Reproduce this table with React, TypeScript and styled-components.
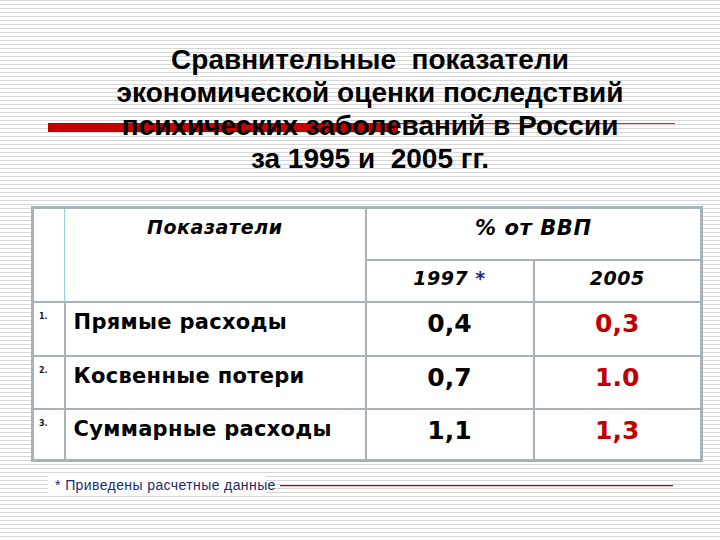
import React from "react";
import styled, { createGlobalStyle } from "styled-components";

const Global = createGlobalStyle`
  html, body { margin: 0; padding: 0; }
  body {
    background: repeating-linear-gradient(180deg, #d7d7d7 0px, #d7d7d7 1.3px, #ffffff 1.3px, #ffffff 4px);
  }
`;

const Page = styled.div`
  width: 720px;
  height: 540px;
  position: relative;
  overflow: hidden;
  display: flex;
  flex-direction: column;
`;

const Title = styled.div`
  position: relative;
  padding: 43px 0 0 20px;
  text-align: center;
  font-family: "Liberation Sans", Arial, sans-serif;
  font-weight: bold;
  font-size: 28px;
  line-height: 33px;
  color: #000;
`;

const TitleLine = styled.div`
  position: relative;
  z-index: 1;
  white-space: pre;
`;

const ThickBar = styled.div`
  position: absolute;
  left: 48px;
  top: 123px;
  width: 350px;
  height: 9px;
  background: #c40000;
  z-index: 0;
`;

const ThinBar = styled.div`
  position: absolute;
  left: 398px;
  top: 123px;
  width: 277px;
  height: 1px;
  background: #c0303a;
  box-shadow: 0 1px 0 #f2c4c4;
  z-index: 0;
`;

const TableWrap = styled.div`
  margin: 31px 0 0 31px;
`;

const Table = styled.table`
  border-collapse: collapse;
  width: 669px;
  table-layout: fixed;
  background: #fff;
  border: 3px solid #a9b1b9;
  font-family: "DejaVu Sans", Verdana, sans-serif;
  font-weight: bold;
  color: #000;
`;

const Col = styled.col<{ $w: number }>`
  width: ${(p) => p.$w}px;
`;

const Row = styled.tr<{ $h: number }>`
  height: ${(p) => p.$h}px;
`;

const Cell = styled.td`
  border: 2px solid #a9b1b9;
  padding: 0;
  vertical-align: top;
`;

const NumHead = styled(Cell)`
  border-right: 1px solid #8fd4d4;
`;

const LabelHead = styled(Cell)`
  border-left: none;
  text-align: center;
  font-style: italic;
  font-size: 19px;
  letter-spacing: 0.6px;
  padding-top: 7px;
`;

const GroupHead = styled(Cell)`
  text-align: center;
  font-style: italic;
  font-size: 21px;
  letter-spacing: 0.6px;
  padding-top: 7px;
`;

const YearHead = styled(Cell)`
  text-align: center;
  font-style: italic;
  font-size: 19px;
  letter-spacing: 0.5px;
  padding-top: 6px;
`;

const Star = styled.span`
  color: #1b2a78;
`;

const NumCell = styled(Cell)`
  font-size: 8px;
  padding: 9px 0 0 5px;
  color: #1a1a2a;
`;

const LabelCell = styled(Cell)`
  font-size: 21px;
  letter-spacing: 0.3px;
  line-height: 24px;
  padding: 7px 0 0 8px;
  white-space: nowrap;
`;

const ValueCell = styled(Cell)<{ $red?: boolean }>`
  font-size: 25px;
  line-height: 28px;
  padding-top: 7px;
  text-align: center;
  color: ${(p) => (p.$red ? "#c00000" : "#000")};
`;

const Footer = styled.div`
  display: flex;
  align-items: center;
  margin: 12px 0 0 48px;
  height: 22px;
`;

const FooterBox = styled.div`
  width: 211px;
  height: 22px;
  padding-left: 7px;
  background: #fff;
  display: flex;
  align-items: center;
  white-space: nowrap;
  font-family: "Liberation Sans", Arial, sans-serif;
  font-size: 14px;
  letter-spacing: 0.4px;
  color: #1c2b6e;
`;

const FooterLine = styled.div`
  margin-left: 14px;
  width: 393px;
  height: 1px;
  background: #7a1f2c;
  box-shadow: 0 1px 0 #f0b8b8;
`;

const rows = [
  { n: "1.", label: "Прямые расходы", a: "0,4", b: "0,3", h: 54 },
  { n: "2.", label: "Косвенные потери", a: "0,7", b: "1.0", h: 53 },
  { n: "3.", label: "Суммарные расходы", a: "1,1", b: "1,3", h: 52 },
];

export default function App() {
  return (
    <Page>
      <Global />
      <Title>
        <ThickBar />
        <ThinBar />
        <TitleLine>{"Сравнительные  показатели"}</TitleLine>
        <TitleLine>экономической оценки последствий</TitleLine>
        <TitleLine>психических заболеваний в России</TitleLine>
        <TitleLine>{"за 1995 и  2005 гг."}</TitleLine>
      </Title>
      <TableWrap>
        <Table>
          <colgroup>
            <Col $w={32} />
            <Col $w={301} />
            <Col $w={168} />
            <Col $w={168} />
          </colgroup>
          <thead>
            <Row $h={52}>
              <NumHead rowSpan={2} />
              <LabelHead rowSpan={2}>Показатели</LabelHead>
              <GroupHead colSpan={2}>% от ВВП</GroupHead>
            </Row>
            <Row $h={42}>
              <YearHead>
                1997 <Star>*</Star>
              </YearHead>
              <YearHead>2005</YearHead>
            </Row>
          </thead>
          <tbody>
            {rows.map((r) => (
              <Row $h={r.h} key={r.n}>
                <NumCell>{r.n}</NumCell>
                <LabelCell>{r.label}</LabelCell>
                <ValueCell>{r.a}</ValueCell>
                <ValueCell $red>{r.b}</ValueCell>
              </Row>
            ))}
          </tbody>
        </Table>
      </TableWrap>
      <Footer>
        <FooterBox>* Приведены расчетные данные</FooterBox>
        <FooterLine />
      </Footer>
    </Page>
  );
}
